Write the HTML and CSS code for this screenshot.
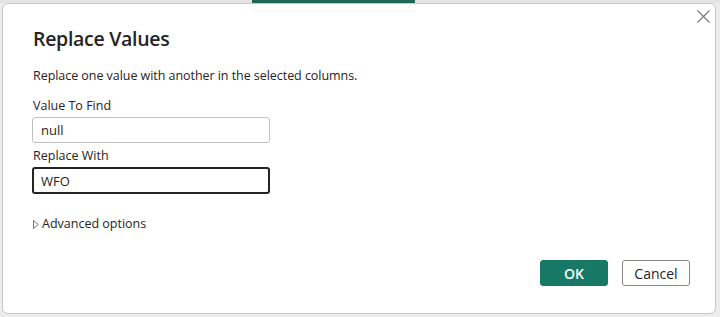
FILE: index.html
```html
<html lang="en">
<head>
    <meta charset="UTF-8">
    <title>Replace Values</title>
    <link rel="stylesheet" href="styles.css">
</head>
<body>
    <div class="backdrop">
        <div class="tab-strip"><div class="tab-active"></div></div>
        <div class="dialog">
            <button class="close" aria-label="Close">
                <svg width="13" height="13" viewBox="0 0 13 13"><path d="M0.5 0.5 L12.5 12.5 M12.5 0.5 L0.5 12.5" stroke="#777" stroke-width="1.1" fill="none"/></svg>
            </button>
            <h1>Replace Values</h1>
            <p class="desc">Replace one value with another in the selected columns.</p>

            <label class="field-label">Value To Find</label>
            <input class="field" type="text" value="null">

            <label class="field-label">Replace With</label>
            <input class="field focused" type="text" value="WFO">

            <div class="advanced">
                <svg width="6" height="9" viewBox="0 0 6 9"><path d="M0.5 0.5 L5.3 4.5 L0.5 8.5 Z" stroke="#666" stroke-width="0.9" fill="none"/></svg>
                <span>Advanced options</span>
            </div>

            <div class="footer">
                <button class="btn primary">OK</button>
                <button class="btn">Cancel</button>
            </div>
        </div>
    </div>
</body>
</html>
```

FILE: styles.css
```css
body {
    margin: 0;
    background-color: #ececec;
    font-family: 'Open Sans', 'Noto Sans', sans-serif;
    color: #252423;
}

.backdrop {
    width: 720px;
    height: 317px;
    position: relative;
    overflow: hidden;
}

/* thin app strip peeking out behind the dialog */
.tab-strip {
    height: 3px;
    background-color: #e4e4e4;
    position: absolute;
    top: 0;
    left: 0;
    right: 0;
}

.tab-active {
    margin-left: 252px;
    width: 163px;
    height: 3px;
    background-color: #1f6656;
}

.dialog {
    position: absolute;
    top: 3px;
    left: 2px;
    width: 712px;
    height: 309px;
    background-color: #fff;
    border: 1px solid #c8c8c8;
    border-radius: 6px;
    box-sizing: content-box;
    padding: 0;
}

.close {
    position: absolute;
    top: 6px;
    right: 5px;
    width: 13px;
    height: 13px;
    padding: 0;
    border: none;
    background: none;
    display: flex;
}

h1 {
    margin: 21px 0 0 30px;
    font-size: 19.5px;
    font-weight: 600;
    letter-spacing: -0.3px;
    line-height: 28px;
    color: #252423;
}

.desc {
    margin: 14px 0 0 30px;
    font-size: 12.5px;
    letter-spacing: -0.05px;
    line-height: 18px;
}

.field-label {
    display: block;
    margin: 12px 0 0 30px;
    font-size: 12.5px;
    line-height: 18px;
}

.field + .field-label {
    margin-top: 4px;
}

.field {
    display: block;
    margin: 2px 0 0 29px;
    width: 238px;
    height: 26px;
    box-sizing: border-box;
    border: 1px solid #c2c2c2;
    border-radius: 3px;
    padding: 0 8px;
    font-family: inherit;
    font-size: 13px;
    color: #252423;
    outline: none;
}

.field.focused {
    margin-top: 2px;
    height: 27px;
    border: 2px solid #252423;
    padding: 0 7px;
}

.advanced {
    margin: 21px 0 0 30px;
    display: flex;
    align-items: center;
    gap: 3px;
    font-size: 12.5px;
    line-height: 18px;
}

.footer {
    position: absolute;
    right: 25px;
    bottom: 27px;
    display: flex;
    gap: 14px;
}

.btn {
    width: 68px;
    height: 26px;
    box-sizing: border-box;
    border: 1px solid #8a8886;
    border-radius: 3px;
    background-color: #fff;
    font-family: inherit;
    font-size: 14px;
    color: #252423;
    padding: 0;
}

.btn.primary {
    background-color: #177865;
    border-color: #177865;
    color: #fff;
    font-weight: 600;
}
```
